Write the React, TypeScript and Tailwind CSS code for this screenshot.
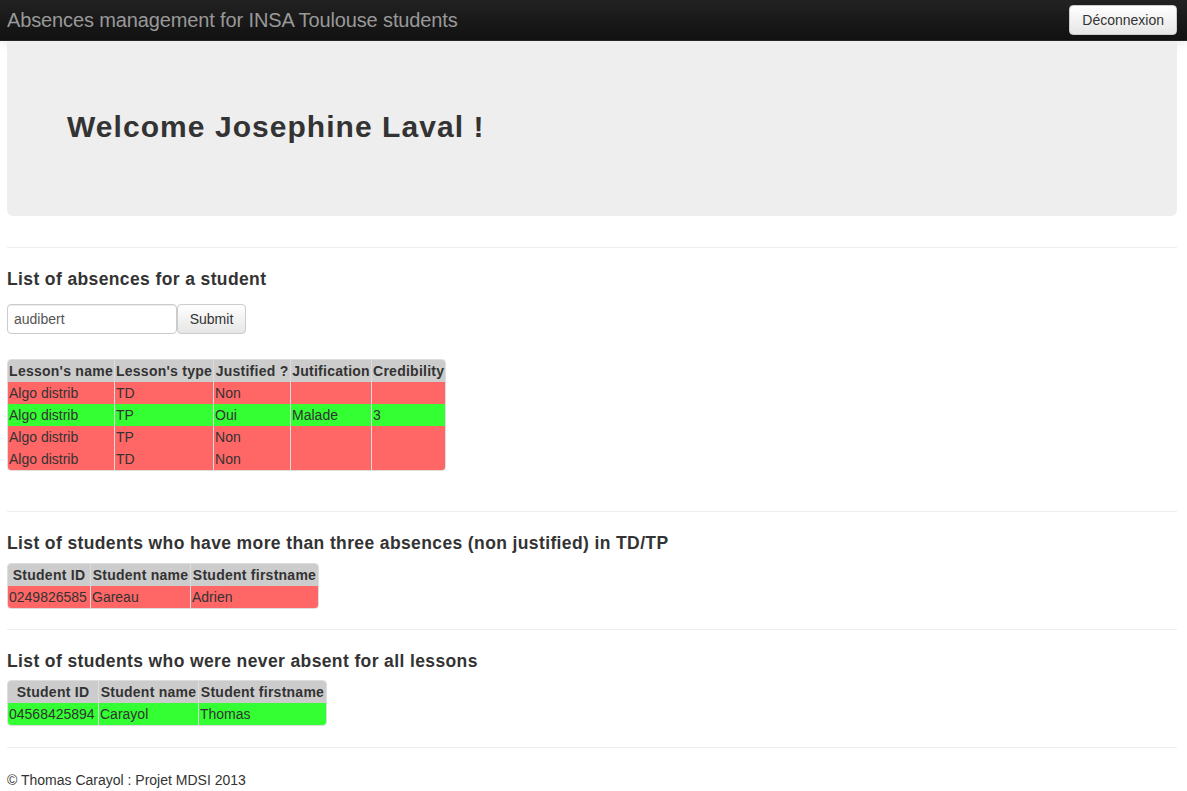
const absences = [
  { name: 'Algo distrib', type: 'TD', justified: 'Non', justification: '', credibility: '', ok: false },
  { name: 'Algo distrib', type: 'TP', justified: 'Oui', justification: 'Malade', credibility: '3', ok: true },
  { name: 'Algo distrib', type: 'TP', justified: 'Non', justification: '', credibility: '', ok: false },
  { name: 'Algo distrib', type: 'TD', justified: 'Non', justification: '', credibility: '', ok: false },
];

function Hr({ className = '' }: { className?: string }) {
  return <div className={`h-[2px] border-t border-b border-t-[#eeeeee] border-b-white ${className}`} />;
}

function StudentTable({ rows, widths, color }: { rows: string[][]; widths: string[]; color: string }) {
  return (
    <div className="w-fit overflow-hidden rounded-[4px] border border-[#dddddd]">
      <table className="table-fixed border-separate border-spacing-0 text-[14px] leading-[20px]">
        <thead>
          <tr className="bg-[#cccccc]">
            {['Student ID', 'Student name', 'Student firstname'].map((h, i) => (
              <th key={h} className={`${widths[i]} h-[22px] px-[1px] text-center font-bold tracking-[0.25px] whitespace-nowrap ${i > 0 ? 'border-l border-[#dddddd]' : ''}`}>
                {h}
              </th>
            ))}
          </tr>
        </thead>
        <tbody>
          {rows.map((r, ri) => (
            <tr key={ri} className={color}>
              {r.map((c, i) => (
                <td key={i} className={`h-[22px] px-[1px] text-left whitespace-nowrap ${i > 0 ? 'border-l border-[#dddddd]' : ''}`}>
                  {c}
                </td>
              ))}
            </tr>
          ))}
        </tbody>
      </table>
    </div>
  );
}

export default function App() {
  return (
    <div className="min-h-[791px] bg-white text-[14px] leading-[20px] text-[#333333]" style={{ fontFamily: '"Liberation Sans", Arial, Helvetica, sans-serif' }}>
      <div className="flex h-[41px] items-center justify-between border-b border-[#252525] bg-gradient-to-b from-[#222222] to-[#111111] pr-[10px] pl-[7px] shadow-[0_1px_10px_rgba(0,0,0,0.1)]">
        <span className="text-[20px] leading-[20px] tracking-[-0.13px] text-[#999999]">Absences management for INSA Toulouse students</span>
        <button className="h-[30px] rounded-[4px] border border-[#cccccc] bg-gradient-to-b from-white to-[#e6e6e6] px-[12px] text-[14px] text-[#333333] shadow-[inset_0_1px_0_rgba(255,255,255,0.2),0_1px_2px_rgba(0,0,0,0.05)]">
          Déconnexion
        </button>
      </div>

      <div className="ml-[7px] w-[1170px]">
        <div className="h-[175px] rounded-b-[6px] bg-[#eeeeee] px-[60px] pt-[66px]">
          <h1 className="text-[30px] leading-[40px] font-bold tracking-[1.05px] text-[#333333]">Welcome Josephine Laval !</h1>
        </div>

        <Hr className="mt-[31px]" />

        <h4 className="mt-[20px] text-[17.5px] leading-[20px] font-bold tracking-[0.38px]">List of absences for a student</h4>
        <div className="mt-[15px] flex">
          <input
            defaultValue="audibert"
            className="h-[30px] w-[170px] rounded-[4px] border border-[#cccccc] px-[6px] text-[14px] text-[#555555] shadow-[inset_0_1px_1px_rgba(0,0,0,0.075)] outline-none"
          />
          <button className="h-[30px] w-[69px] rounded-[4px] border border-[#cccccc] bg-gradient-to-b from-white to-[#e6e6e6] text-[14px] text-[#333333]">
            Submit
          </button>
        </div>

        <div className="mt-[25px] w-fit overflow-hidden rounded-[4px] border border-[#dddddd]">
          <table className="table-fixed border-separate border-spacing-0 text-[14px] leading-[20px]">
            <thead>
              <tr className="bg-[#cccccc]">
                <th className="h-[22px] w-[106px] px-[1px] text-center font-bold tracking-[0.25px] whitespace-nowrap">Lesson's name</th>
                <th className="w-[99px] border-l border-[#dddddd] px-[1px] text-center font-bold tracking-[0.25px] whitespace-nowrap">Lesson's type</th>
                <th className="w-[77px] border-l border-[#dddddd] px-[1px] text-center font-bold tracking-[0.25px] whitespace-nowrap">Justified ?</th>
                <th className="w-[81px] border-l border-[#dddddd] px-[1px] text-center font-bold tracking-[0.25px] whitespace-nowrap">Jutification</th>
                <th className="w-[74px] border-l border-[#dddddd] px-[1px] text-center font-bold tracking-[0.25px] whitespace-nowrap">Credibility</th>
              </tr>
            </thead>
            <tbody>
              {absences.map((a, i) => (
                <tr key={i} className={a.ok ? 'bg-[#33ff33]' : 'bg-[#ff6666]'}>
                  <td className="h-[22px] px-[1px]">{a.name}</td>
                  <td className="border-l border-[#dddddd] px-[1px]">{a.type}</td>
                  <td className="border-l border-[#dddddd] px-[1px]">{a.justified}</td>
                  <td className="border-l border-[#dddddd] px-[1px]">{a.justification}</td>
                  <td className="border-l border-[#dddddd] px-[1px]">{a.credibility}</td>
                </tr>
              ))}
            </tbody>
          </table>
        </div>

        <Hr className="mt-[40px]" />

        <h4 className="mt-[20px] text-[17.5px] leading-[20px] font-bold tracking-[0.38px]">
          List of students who have more than three absences (non justified) in TD/TP
        </h4>
        <div className="mt-[10px]">
          <StudentTable
            rows={[['0249826585', 'Gareau', 'Adrien']]}
            widths={['w-[82px]', 'w-[100px]', 'w-[128px]']}
            color="bg-[#ff6666]"
          />
        </div>

        <Hr className="mt-[20px]" />

        <h4 className="mt-[20px] text-[17.5px] leading-[20px] font-bold tracking-[0.38px]">List of students who were never absent for all lessons</h4>
        <div className="mt-[9px]">
          <StudentTable
            rows={[['04568425894', 'Carayol', 'Thomas']]}
            widths={['w-[90px]', 'w-[100px]', 'w-[128px]']}
            color="bg-[#33ff33]"
          />
        </div>

        <Hr className="mt-[21px]" />

        <footer className="mt-[21px]">© Thomas Carayol : Projet MDSI 2013</footer>
      </div>
    </div>
  );
}
